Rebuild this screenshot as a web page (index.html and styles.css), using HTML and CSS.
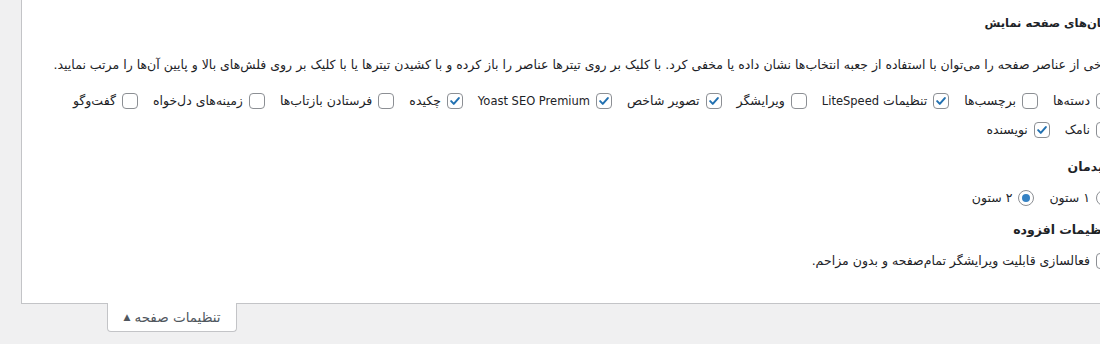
FILE: index.html
```html
<!DOCTYPE html>
<html lang="fa" dir="rtl">
<head>
<meta charset="utf-8">
<title>تنظیمات صفحه</title>
<link rel="stylesheet" href="styles.css">
</head>
<body>
<div class="viewport">
  <div class="screen-meta">
    <div class="options-wrap">
      <fieldset class="prefs">
        <legend class="first">المان‌های صفحه نمایش</legend>
        <p class="desc">برخی از عناصر صفحه را می‌توان با استفاده از جعبه انتخاب‌ها نشان داده یا مخفی کرد. با کلیک بر روی تیترها عناصر را باز کرده و با کشیدن تیترها یا با کلیک بر روی فلش‌های بالا و پایین آن‌ها را مرتب نمایید.</p>
        <div class="checks boxes">
          <label class="opt"><span class="cb"></span>دسته‌ها</label>
          <label class="opt"><span class="cb"></span>برچسب‌ها</label>
          <label class="opt"><span class="cb on"><svg viewBox="0 0 16 16"><path d="M3.6 8.2l3 3.1 5.8-6.6"/></svg></span><span>تنظیمات <span class="lat">LiteSpeed</span></span></label>
          <label class="opt"><span class="cb"></span>ویرایشگر</label>
          <label class="opt"><span class="cb on"><svg viewBox="0 0 16 16"><path d="M3.6 8.2l3 3.1 5.8-6.6"/></svg></span>تصویر شاخص</label>
          <label class="opt"><span class="cb on"><svg viewBox="0 0 16 16"><path d="M3.6 8.2l3 3.1 5.8-6.6"/></svg></span><span class="lat">Yoast SEO Premium</span></label>
          <label class="opt"><span class="cb on"><svg viewBox="0 0 16 16"><path d="M3.6 8.2l3 3.1 5.8-6.6"/></svg></span>چکیده</label>
          <label class="opt"><span class="cb"></span>فرستادن بازتاب‌ها</label>
          <label class="opt"><span class="cb"></span>زمینه‌های دل‌خواه</label>
          <label class="opt"><span class="cb"></span>گفت‌وگو</label>
          <label class="opt"><span class="cb"></span>نامک</label>
          <label class="opt"><span class="cb on"><svg viewBox="0 0 16 16"><path d="M3.6 8.2l3 3.1 5.8-6.6"/></svg></span>نویسنده</label>
        </div>
      </fieldset>
      <fieldset class="prefs">
        <legend>چیدمان</legend>
        <div class="checks">
          <label class="opt"><span class="rd"></span>۱ ستون</label>
          <label class="opt"><span class="rd on"></span>۲ ستون</label>
        </div>
      </fieldset>
      <fieldset class="prefs">
        <legend>تنظیمات افزوده</legend>
        <div class="checks">
          <label class="opt"><span class="cb"></span>فعالسازی قابلیت ویرایشگر تمام‌صفحه و بدون مزاحم.</label>
        </div>
      </fieldset>
    </div>
  </div>
  <div class="meta-links">
    <button class="tab" type="button">تنظیمات صفحه <span class="arrow">▲</span></button>
  </div>
</div>
</body>
</html>
```

FILE: styles.css
```css
* { box-sizing: border-box; }

html, body {
  margin: 0;
  padding: 0;
  background: #f0f0f1;
}

body {
  font-family: "DejaVu Sans", "Noto Sans", sans-serif;
  font-size: 12.5px;
  color: #1d2327;
}

.viewport {
  width: 1100px;
  height: 344px;
  overflow: hidden;
  direction: rtl;
}

.screen-meta {
  margin-left: 21px;
  margin-right: -32px;
  background: #fff;
  border: 1px solid #c3c4c7;
  border-top: none;
  height: 304px;
}

.options-wrap {
  padding: 0 19px 12px 6px;
}

.prefs {
  border: 0;
  margin: 0;
  padding: 0;
  min-width: 0;
}

.prefs legend {
  padding: 0;
  font-weight: 700;
  font-size: 12.5px;
  line-height: 20px;
}

.prefs legend.first {
  padding-top: 13px;
  font-size: 11.5px;
  margin-right: -5px;
}

.desc {
  margin: 0;
  padding-top: 22px;
  font-size: 12.5px;
  line-height: 20px;
  white-space: nowrap;
}

.checks {
  display: flex;
  flex-wrap: wrap;
  row-gap: 9px;
  padding-top: 11px;
  padding-bottom: 12px;
}

.checks.boxes {
  padding-top: 16px;
  padding-bottom: 17px;
}

.opt {
  display: inline-flex;
  align-items: center;
  gap: 6px;
  line-height: 20px;
  margin-left: 15px;
  white-space: nowrap;
}

.lat {
  font-size: 11.5px;
}

.cb, .rd {
  width: 16px;
  height: 16px;
  border: 1px solid #8c8f94;
  background: #fff;
  display: inline-flex;
  align-items: center;
  justify-content: center;
  flex: none;
}

.cb { border-radius: 4px; }

.cb svg {
  width: 16px;
  height: 16px;
  fill: none;
  stroke: #2271b1;
  stroke-width: 2.3;
  stroke-linecap: round;
  stroke-linejoin: round;
}

.rd { border-radius: 50%; }

.rd.on::after {
  content: "";
  width: 8px;
  height: 8px;
  border-radius: 50%;
  background: #3582c4;
}

.meta-links {
  display: flex;
  justify-content: flex-end;
  padding-left: 107px;
}

.tab {
  width: 130px;
  height: 29px;
  margin-top: -1px;
  background: #fff;
  border: 1px solid #c3c4c7;
  border-top: none;
  border-radius: 0 0 4px 4px;
  font-family: "DejaVu Sans", sans-serif;
  font-size: 13.5px;
  color: #50575e;
  padding: 0;
  display: flex;
  align-items: center;
  justify-content: center;
  gap: 4px;
  direction: rtl;
}

.arrow { font-size: 9px; }
```
